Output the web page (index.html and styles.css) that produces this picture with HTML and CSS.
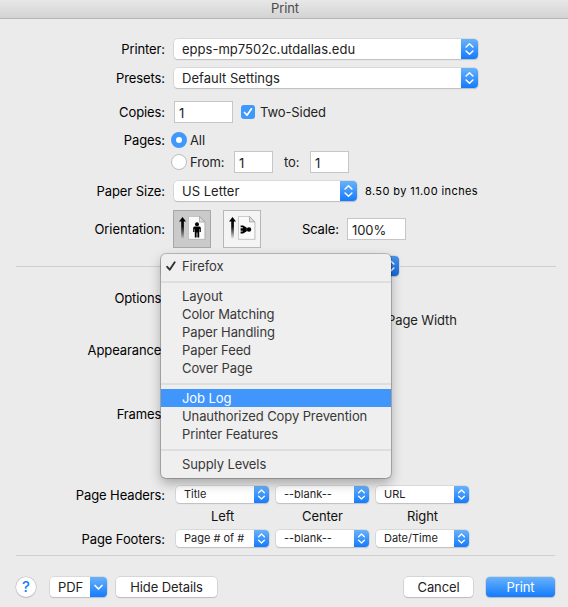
FILE: index.html
```html
<!DOCTYPE html>
<html lang="en">
<head>
<meta charset="utf-8">
<title>Print</title>
<link rel="stylesheet" href="styles.css">
</head>
<body>
<svg class="defs" width="0" height="0">
  <defs>
    <linearGradient id="fade" x1="0" y1="0" x2="0" y2="1">
      <stop offset="0" stop-color="#000"/><stop offset=".45" stop-color="#111"/><stop offset="1" stop-color="#000" stop-opacity="0.05"/>
    </linearGradient>
    <symbol id="updown" viewBox="0 0 16 20">
      <path d="M4.600 8 8 4.700 11.400 8M4.600 12 8 15.300 11.400 12" fill="none" stroke="#fff" stroke-width="1.500" stroke-linecap="round" stroke-linejoin="round"/>
    </symbol>
    <symbol id="page" viewBox="0 0 38 38">
      <path d="M9.500 7 13 11.500H10.900V28.500H8.200V11.500H6Z" fill="url(#fade)"/>
      <path d="M15.500 6.500H27L32.500 12V30H15.500Z" fill="#000" opacity=".13"/>
      <path d="M15.500 6.500H26.500L31.800 12V29.300H15.500Z" fill="#fafafa" stroke="#b5b5b5" stroke-width=".6"/>
      <path d="M26.500 6.500V12H31.800Z" fill="#ddd" stroke="#999" stroke-width=".7"/>
    </symbol>
    <symbol id="person" viewBox="0 0 8 16">
      <circle cx="4" cy="2.200" r="2"/>
      <path d="M1.500 4.500H6.500Q7.800 4.500 7.800 6V10H6.600V7H6.200V15.500H4.400V10.500H3.600V15.500H1.800V7H1.400V10H.2V6Q.2 4.500 1.500 4.500Z"/>
    </symbol>
  </defs>
</svg>
<div class="dialog">
  <header class="titlebar">Print</header>
  <main class="form">
    <div class="row printer"><span class="label">Printer:</span><div class="select wide"><span class="value host">epps-mp7502c.utdallas.edu</span><svg class="arrow"><use href="#updown"/></svg></div></div>
    <div class="row presets"><span class="label">Presets:</span><div class="select wide"><span class="value host">Default Settings</span><svg class="arrow"><use href="#updown"/></svg></div></div>
    <div class="row copies"><span class="label">Copies:</span><span class="field">1</span>
      <svg class="check" viewBox="0 0 14 14"><path d="M3.500 7.500 6 10.200 10.500 3.800" fill="none" stroke="#fff" stroke-width="1.700" stroke-linecap="round" stroke-linejoin="round"/></svg><span class="text">Two-Sided</span></div>
    <div class="row all"><span class="label">Pages:</span><span class="radio on"></span><span class="text">All</span></div>
    <div class="row from"><span class="label"></span><span class="radio"></span><span class="text from-text">From:</span><span class="field small">1</span><span class="text to-text">to:</span><span class="field small">1</span></div>
    <div class="row paper"><span class="label">Paper Size:</span><div class="select medium"><span class="value host">US Letter</span><svg class="arrow"><use href="#updown"/></svg></div><span class="note">8.50 by 11.00 inches</span></div>
    <div class="row orientation"><span class="label">Orientation:</span>
      <svg class="orient pressed" viewBox="0 0 38 38"><use href="#page" width="38" height="38"/><use href="#person" x="20" y="12" width="8" height="16"/></svg>
      <svg class="orient" viewBox="0 0 38 38"><use href="#page" width="38" height="38"/><path d="M17.600 15.400H20.200L23.800 17.800V21.200L20.200 23.500H17.600V21.600H19.800V20.700H17.600V18.200H19.800V17.300H17.600Z"/><circle cx="26" cy="19.500" r="2.200"/></svg>
      <span class="scale">Scale:</span><span class="field">100%</span></div>
    <div class="row pane"><i class="rule pane-left"></i><div class="select pane-select"><span class="value"></span><svg class="arrow"><use href="#updown"/></svg></div><i class="rule pane-right"></i>
      <ul class="menu">
        <li><svg class="tick" viewBox="0 0 10 10"><path d="M1.200 5.800 3.700 8.700 8.700 1.300" fill="none" stroke="#303030" stroke-width="1.900" stroke-linecap="round" stroke-linejoin="round"/></svg>Firefox</li>
        <li class="divider"></li>
        <li>Layout</li><li>Color Matching</li><li>Paper Handling</li><li>Paper Feed</li><li>Cover Page</li>
        <li class="divider"></li>
        <li class="active">Job Log</li><li>Unauthorized Copy Prevention</li><li>Printer Features</li>
        <li class="divider"></li>
        <li>Supply Levels</li>
      </ul>
    </div>
    <div class="row options"><span class="label">Options:</span></div>
    <div class="row width"><span class="page-width">Page Width</span></div>
    <div class="row appearance"><span class="label">Appearance:</span></div>
    <div class="row frames"><span class="label">Frames:</span></div>
    <div class="row headers"><span class="label">Page Headers:</span>
      <div class="trio">
        <div class="select mini"><span class="value">Title</span><svg class="arrow"><use href="#updown"/></svg></div>
        <div class="select mini"><span class="value">--blank--</span><svg class="arrow"><use href="#updown"/></svg></div>
        <div class="select mini"><span class="value">URL</span><svg class="arrow"><use href="#updown"/></svg></div>
      </div></div>
    <div class="row names"><span class="label"></span><div class="trio"><span>Left</span><span>Center</span><span>Right</span></div></div>
    <div class="row footers"><span class="label">Page Footers:</span>
      <div class="trio">
        <div class="select mini"><span class="value">Page # of #</span><svg class="arrow"><use href="#updown"/></svg></div>
        <div class="select mini"><span class="value">--blank--</span><svg class="arrow"><use href="#updown"/></svg></div>
        <div class="select mini"><span class="value">Date/Time</span><svg class="arrow"><use href="#updown"/></svg></div>
      </div></div>
  </main>
  <footer class="actions">
    <span class="help">?</span>
    <div class="select pdf"><span class="value">PDF</span><svg class="arrow" viewBox="0 0 16 20"><path d="M4.500 8.500 8 12 11.500 8.500" fill="none" stroke="#fff" stroke-width="1.700" stroke-linecap="round" stroke-linejoin="round"/></svg></div>
    <span class="button details">Hide Details</span>
    <span class="button cancel">Cancel</span>
    <span class="button primary">Print</span>
  </footer>
</div>
</body>
</html>
```
FILE: styles.css
```css
* { box-sizing: border-box; }
body { margin: 0; background: #ebebeb; color: #111; font: 13px/18px Inter, "Liberation Sans", sans-serif; letter-spacing: -0.1px; }
.defs { display: block; height: 0; }
.dialog { width: 568px; height: 607px; overflow: hidden; white-space: nowrap; }
.titlebar { height: 19px; background: linear-gradient(#e8e8e8, #d3d3d3); border-bottom: 1px solid #b5b5b5; text-align: center; line-height: 17px; color: #4a4a4a; padding-left: 2px; }
.form { padding-top: 15px; height: 536px; }
.row { display: flex; align-items: center; }
.label { width: 165px; margin-right: 9px; text-align: right; flex: none; color: #000; }
.printer, .presets { height: 29px; }
.copies { height: 38px; margin-top: 1px; }
.all { height: 18px; }
.from { height: 26px; }
.paper { height: 32px; }
.orientation { height: 44px; }
.pane { height: 30px; position: relative; }
.options { height: 34px; }
.width { height: 10px; }
.appearance { height: 50px; }
.frames { height: 78px; }
.headers { height: 27px; margin-top: 28px; }
.names { height: 16px; }
.footers { height: 29px; }

.select { display: flex; height: 20px; background: #fff; border-radius: 4px; box-shadow: 0 0 0 .5px #c8c8c8, 0 1px 1px #b8b8b8; flex: none; }
.value { flex: 1; padding-left: 8px; line-height: 20px; color: #222; }
.host { letter-spacing: .02px; }
.arrow { width: 17px; height: 20px; flex: none; background: linear-gradient(#68b2fa, #147bfd); border-radius: 0 4px 4px 0; }
.wide { width: 304px; }
.medium { width: 183px; }
.pane-select { width: 238px; }
.pane-select .arrow { background: linear-gradient(#4b95ee, #1468dc); }
.mini { width: 93px; height: 17px; font-size: 11px; letter-spacing: 0; }
.mini .value { line-height: 17px; }
.mini .arrow { width: 15px; height: 17px; }
.field { width: 59px; height: 22px; border: 1px solid #c6c6c6; background: #fff; padding-left: 4px; line-height: 22px; color: #222; flex: none; }
.small { width: 39px; }
.check { width: 14px; height: 14px; margin: 0 5px 0 8px; border-radius: 3px; background: #3f98fb; }
.text { color: #222; }
.radio { width: 16px; height: 16px; margin: 0 3px 0 -3px; border-radius: 50%; background: #fff; border: 1px solid #bcbcbc; flex: none; }
.radio.on { border: 5px solid #3f98fb; }
.from-text { width: 44px; }
.to-text { width: 37px; padding-left: 11px; }
.note { font-size: 11px; margin-left: 8px; letter-spacing: .4px; color: #000; }
.orient { width: 38px; height: 38px; margin-right: 12px; background: #f4f4f4; outline: 1px solid #b8b8b8; outline-offset: -1px; flex: none; }
.pressed { background: #cacaca; outline-color: #a7a7a7; margin-left: -1px; }
.scale { width: 66px; text-align: right; margin-right: 8px; color: #000; }
.rule { height: 1px; background: #cfcfcf; }
.pane-left { width: 145px; margin-left: 16px; }
.pane-right { width: 156px; margin-left: 1px; }
.menu { position: absolute; left: 161px; top: 3px; width: 230px; height: 224px; margin: 0; padding: 3px 0; list-style: none; background: #efefef; border-radius: 5px; box-shadow: 0 0 0 1px rgba(0,0,0,.2), 0 5px 12px rgba(0,0,0,.3); color: #383838; }
.menu li { height: 18px; padding-left: 21px; position: relative; }
.menu .divider { height: 12px; padding: 6px 0 0; }
.menu .divider::after { content: ""; display: block; height: 2px; background: #dedede; }
.menu .active { background: #4196fb; color: #fff; }
.tick { position: absolute; left: 5px; top: 4px; width: 10px; height: 10px; }
.page-width { margin-left: 387px; color: #222; }
.trio { display: grid; grid-template-columns: repeat(3, 93px); column-gap: 7px; margin-left: 2px; }
.names .trio { text-align: center; }
.actions { height: 52px; margin: 0 13px 0 16px; border-top: 1px solid #d0d0d0; padding-top: 21px; display: flex; align-items: flex-start; }
.help { width: 20px; height: 20px; border-radius: 50%; background: #fff; box-shadow: 0 0 0 .5px #bbb, 0 1px 1px #bbb; color: #157efb; text-align: center; font-size: 15px; line-height: 20px; font-weight: 500; }
.pdf { width: 57px; margin-left: 14px; }
.button { height: 20px; border-radius: 4px; background: #fff; box-shadow: 0 0 0 .5px #c2c2c2, 0 1px 1px #b8b8b8; text-align: center; line-height: 20px; color: #222; }
.details { width: 101px; margin-left: 9px; }
.cancel { width: 69px; margin-left: auto; }
.primary { width: 69px; margin-left: 13px; color: #fff; background: linear-gradient(#68b2fa, #147bfd); }
```
